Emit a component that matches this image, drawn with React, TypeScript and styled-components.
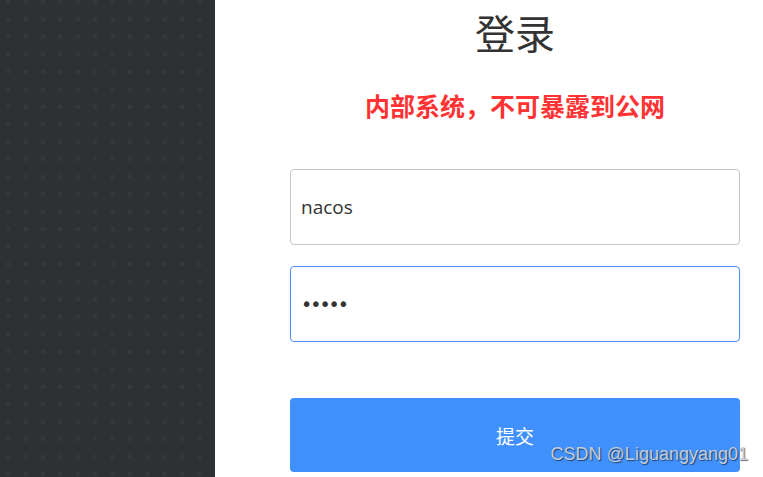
import React from 'react';
import styled, { createGlobalStyle } from 'styled-components';

const GlobalStyle = createGlobalStyle`
    html, body {
        margin: 0;
        padding: 0;
        height: 100%;
        background: #ffffff;
    }
    #root {
        height: 100%;
    }
    * {
        box-sizing: border-box;
    }
`;

function App() {
    return (
        <>
            <GlobalStyle />
            <Page>
                <Sidebar />
                <Main>
                    <Form onSubmit={(e) => e.preventDefault()}>
                        <Title>登录</Title>
                        <Warning>内部系统，不可暴露到公网</Warning>
                        <Field type="text" defaultValue="nacos" />
                        <Field type="password" defaultValue="nacos" $active autoFocus />
                        <Submit type="submit">提交</Submit>
                    </Form>
                </Main>
                <Watermark>CSDN @Liguangyang01</Watermark>
            </Page>
        </>
    );
}

const Page = styled.div`
    position: relative;
    display: flex;
    width: 763px;
    height: 477px;
    overflow: hidden;
    font-family: "Noto Sans", "Noto Sans CJK SC", sans-serif;
`;

// square dots on dark background
const Sidebar = styled.div`
    width: 215px;
    flex-shrink: 0;
    background-color: #2f3034;
    background-image: conic-gradient(from 270deg at 4px 4px, #37383c 25%, transparent 0);
    background-size: 17.4px 17.5px;
    background-position: 6.3px -0.3px;
`;

const Main = styled.div`
    flex: 1;
    padding-left: 75px;
`;

const Form = styled.form`
    width: 450px;
    display: flex;
    flex-direction: column;
`;

const Title = styled.h1`
    margin: 6px 0 0;
    font-family: "Noto Sans CJK SC", sans-serif;
    font-weight: 400;
    font-size: 40px;
    line-height: 52px;
    text-align: center;
    color: #333333;
`;

const Warning = styled.div`
    margin-top: 32px;
    font-family: "Noto Sans CJK SC", sans-serif;
    font-weight: 700;
    font-size: 25px;
    line-height: 30px;
    text-align: center;
    color: #ff3333;
`;

const Field = styled.input<{ $active?: boolean }>`
    height: 76px;
    margin-top: ${(p) => (p.$active ? '21px' : '49px')};
    padding: 0 10px;
    border: 1px solid ${(p) => (p.$active ? '#4d8cf5' : '#c4c6cf')};
    border-radius: 4px;
    font-family: ${(p) => (p.$active ? '"DejaVu Sans", sans-serif' : '"Open Sans", "Noto Sans", sans-serif')};
    font-size: 19px;
    letter-spacing: ${(p) => (p.$active ? '-2px' : '0')};
    color: #333333;
    outline: none;
    background: #ffffff;
    caret-color: #333333;
`;

const Submit = styled.button`
    height: 74px;
    margin-top: 56px;
    border: none;
    border-radius: 4px;
    background: #4090fe;
    color: #ffffff;
    font-family: "Noto Sans CJK SC", sans-serif;
    font-size: 19px;
    cursor: pointer;
`;

const Watermark = styled.div`
    position: absolute;
    right: 15px;
    top: 444px;
    font-family: "Liberation Sans", sans-serif;
    font-size: 18px;
    color: #c8ccd4;
    text-shadow: 1px 1px 1px rgba(0, 0, 0, 0.55);
    pointer-events: none;
`;

export default App;
